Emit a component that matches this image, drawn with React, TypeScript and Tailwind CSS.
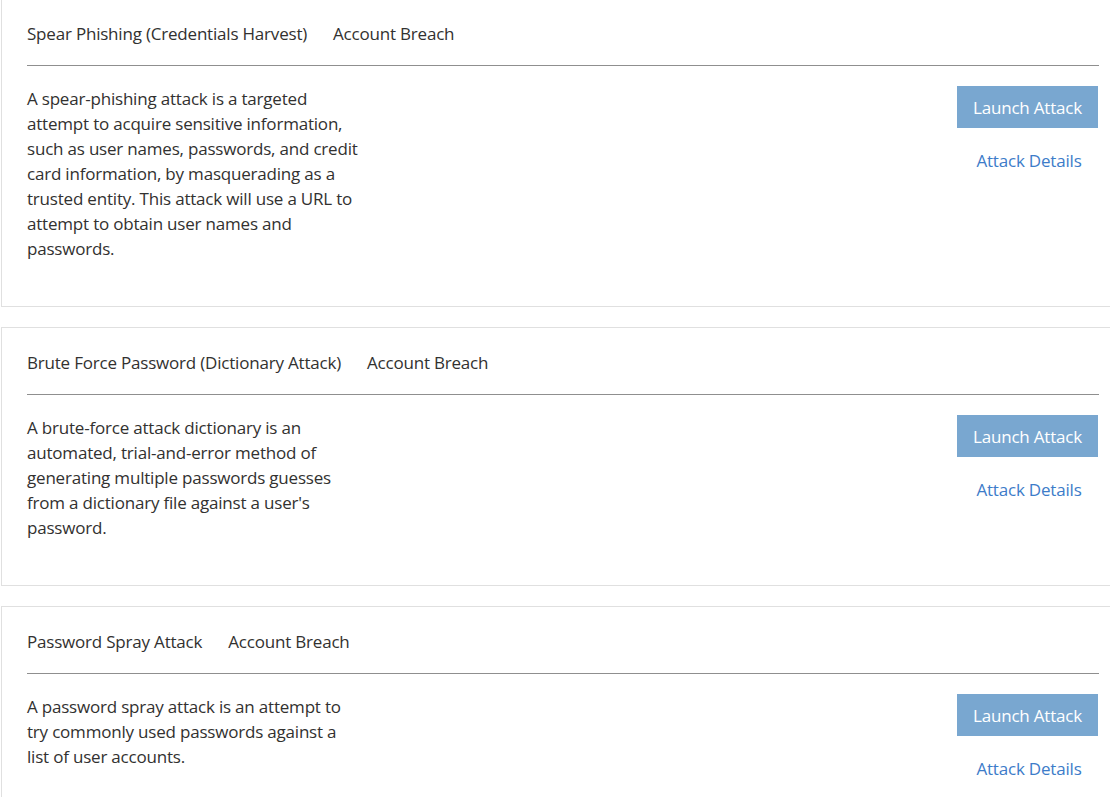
type Attack = {
  name: string;
  category: string;
  lines: string[];
};

const attacks: Attack[] = [
  {
    name: "Spear Phishing (Credentials Harvest)",
    category: "Account Breach",
    lines: [
      "A spear-phishing attack is a targeted",
      "attempt to acquire sensitive information,",
      "such as user names, passwords, and credit",
      "card information, by masquerading as a",
      "trusted entity. This attack will use a URL to",
      "attempt to obtain user names and",
      "passwords.",
    ],
  },
  {
    name: "Brute Force Password (Dictionary Attack)",
    category: "Account Breach",
    lines: [
      "A brute-force attack dictionary is an",
      "automated, trial-and-error method of",
      "generating multiple passwords guesses",
      "from a dictionary file against a user's",
      "password.",
    ],
  },
  {
    name: "Password Spray Attack",
    category: "Account Breach",
    lines: [
      "A password spray attack is an attempt to",
      "try commonly used passwords against a",
      "list of user accounts.",
    ],
  },
];

function AttackCard({ attack }: { attack: Attack }) {
  return (
    <section className="w-[1124px] shrink-0 border border-[#e0e0e0] bg-white px-[25px] pt-[22px] pb-[45px]">
      <header className="flex gap-[26px] leading-[25px] text-[#323130]">
        <span>{attack.name}</span>
        <span>{attack.category}</span>
      </header>
      <div className="mt-[19px] h-px bg-[#8f8f8f]" />
      <div className="mt-5 flex items-start justify-between">
        <p className="leading-[25px] text-[#323130]">
          {attack.lines.map((line) => (
            <span key={line} className="block whitespace-nowrap">
              {line}
            </span>
          ))}
        </p>
        <div className="mr-px flex w-[141px] flex-col items-center">
          <button
            type="button"
            className="h-[42px] w-[141px] bg-[#79a7d0] pt-px text-white"
          >
            Launch Attack
          </button>
          <a href="#" className="mt-5 pl-[3px] leading-[25px] text-[#3d7cc9]">
            Attack Details
          </a>
        </div>
      </div>
    </section>
  );
}

export default function App() {
  return (
    <div
      className="h-[797px] w-[1110px] overflow-hidden bg-white text-[17px] tracking-[-0.2px]"
      style={{ fontFamily: '"Open Sans", "Noto Sans", sans-serif' }}
    >
      <div className="-mt-[2px] flex flex-col gap-5 pl-px">
        {attacks.map((attack) => (
          <AttackCard key={attack.name} attack={attack} />
        ))}
      </div>
    </div>
  );
}
